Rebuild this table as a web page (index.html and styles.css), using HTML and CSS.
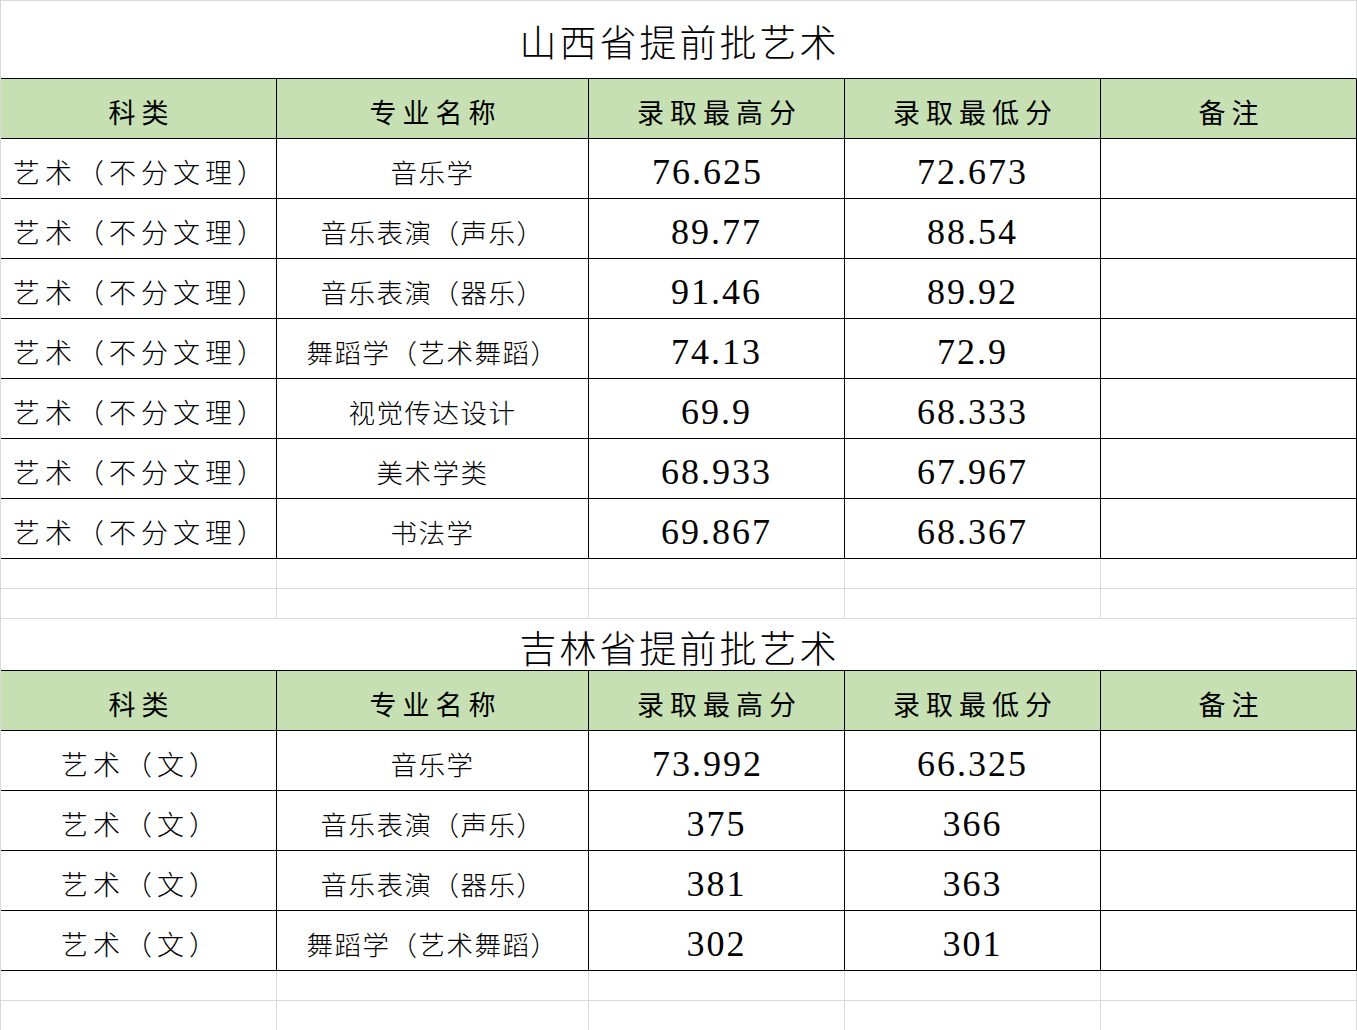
FILE: index.html
```html
<!DOCTYPE html>
<html>
<head>
<meta charset="utf-8">
<title>提前批艺术</title>
<link rel="stylesheet" href="styles.css">
</head>
<body>
<div class="sheet">
  <div class="title">山西省提前批艺术</div>
  <div class="row head">
    <div class="c">科类</div><div class="c">专业名称</div><div class="c">录取最高分</div><div class="c">录取最低分</div><div class="c">备注</div>
  </div>
  <div class="row data">
    <div class="c k">艺术（不分文理）</div><div class="c m">音乐学</div><div class="c n sh"><span class="num">76.625</span></div><div class="c n"><span class="num">72.673</span></div><div class="c"></div>
  </div>
  <div class="row data">
    <div class="c k">艺术（不分文理）</div><div class="c m">音乐表演（声乐）</div><div class="c n"><span class="num">89.77</span></div><div class="c n"><span class="num">88.54</span></div><div class="c"></div>
  </div>
  <div class="row data">
    <div class="c k">艺术（不分文理）</div><div class="c m">音乐表演（器乐）</div><div class="c n"><span class="num">91.46</span></div><div class="c n"><span class="num">89.92</span></div><div class="c"></div>
  </div>
  <div class="row data">
    <div class="c k">艺术（不分文理）</div><div class="c m">舞蹈学（艺术舞蹈）</div><div class="c n"><span class="num">74.13</span></div><div class="c n"><span class="num">72.9</span></div><div class="c"></div>
  </div>
  <div class="row data">
    <div class="c k">艺术（不分文理）</div><div class="c m">视觉传达设计</div><div class="c n"><span class="num">69.9</span></div><div class="c n"><span class="num">68.333</span></div><div class="c"></div>
  </div>
  <div class="row data">
    <div class="c k">艺术（不分文理）</div><div class="c m">美术学类</div><div class="c n"><span class="num">68.933</span></div><div class="c n"><span class="num">67.967</span></div><div class="c"></div>
  </div>
  <div class="row data">
    <div class="c k">艺术（不分文理）</div><div class="c m">书法学</div><div class="c n"><span class="num">69.867</span></div><div class="c n"><span class="num">68.367</span></div><div class="c"></div>
  </div>
  <div class="row empty"><div class="c"></div><div class="c"></div><div class="c"></div><div class="c"></div><div class="c"></div></div>
  <div class="row empty"><div class="c"></div><div class="c"></div><div class="c"></div><div class="c"></div><div class="c"></div></div>

  <div class="title title2">吉林省提前批艺术</div>
  <div class="row head">
    <div class="c">科类</div><div class="c">专业名称</div><div class="c">录取最高分</div><div class="c">录取最低分</div><div class="c">备注</div>
  </div>
  <div class="row data">
    <div class="c k">艺术（文）</div><div class="c m">音乐学</div><div class="c n sh"><span class="num">73.992</span></div><div class="c n"><span class="num">66.325</span></div><div class="c"></div>
  </div>
  <div class="row data">
    <div class="c k">艺术（文）</div><div class="c m">音乐表演（声乐）</div><div class="c n"><span class="num">375</span></div><div class="c n"><span class="num">366</span></div><div class="c"></div>
  </div>
  <div class="row data">
    <div class="c k">艺术（文）</div><div class="c m">音乐表演（器乐）</div><div class="c n"><span class="num">381</span></div><div class="c n"><span class="num">363</span></div><div class="c"></div>
  </div>
  <div class="row data">
    <div class="c k">艺术（文）</div><div class="c m">舞蹈学（艺术舞蹈）</div><div class="c n"><span class="num">302</span></div><div class="c n"><span class="num">301</span></div><div class="c"></div>
  </div>
  <div class="row empty"><div class="c"></div><div class="c"></div><div class="c"></div><div class="c"></div><div class="c"></div></div>
  <div class="row empty"><div class="c"></div><div class="c"></div><div class="c"></div><div class="c"></div><div class="c"></div></div>
</div>
</body>
</html>
```
FILE: styles.css
```css
html, body {
  margin: 0;
  padding: 0;
  background: #ffffff;
}

body {
  font-family: "Noto Sans CJK SC", sans-serif;
  color: #000;
}

.sheet {
  width: 1357px;
  box-sizing: border-box;
  border-left: 1px solid #d9d9d9;
  border-top: 1px solid #d9d9d9;
}

.title {
  height: 78px;
  box-sizing: border-box;
  border-right: 1px solid #d9d9d9;
  border-bottom: 1px solid #000;
  display: flex;
  align-items: center;
  justify-content: center;
  padding-top: 2px;
  padding-left: 2px;
  font-size: 37px;
  letter-spacing: 3px;
  font-weight: 300;
}

.title2 {
  height: 52px;
  padding-top: 4px;
}

.row {
  display: grid;
  grid-template-columns: 276px 312px 256px 256px 256px;
  height: 60px;
}

.c {
  box-sizing: border-box;
  border-right: 1px solid #000;
  border-bottom: 1px solid #000;
  display: flex;
  align-items: center;
  justify-content: center;
  white-space: nowrap;
  overflow: hidden;
}

.head .c {
  background: #c6e0b4;
  font-size: 27px;
  letter-spacing: 6px;
  padding-top: 5px;
  padding-left: 6px;
  font-weight: 400;
}

.data .c {
  padding-top: 5px;
}

.data .k {
  font-size: 27px;
  letter-spacing: 5px;
  font-weight: 300;
  padding-left: 5px;
}

.data .m {
  font-size: 26.5px;
  letter-spacing: 1.5px;
  font-weight: 300;
}

.data .n {
  padding-top: 6px;
}

.num {
  font-family: "Liberation Serif", "Times New Roman", serif;
  font-size: 36px;
  font-weight: 400;
  letter-spacing: 2px;
}

.data .sh {
  padding-right: 18px;
}

.empty {
  height: 30px;
}

.empty .c {
  border-right-color: #d9d9d9;
  border-bottom-color: #d9d9d9;
}
```
